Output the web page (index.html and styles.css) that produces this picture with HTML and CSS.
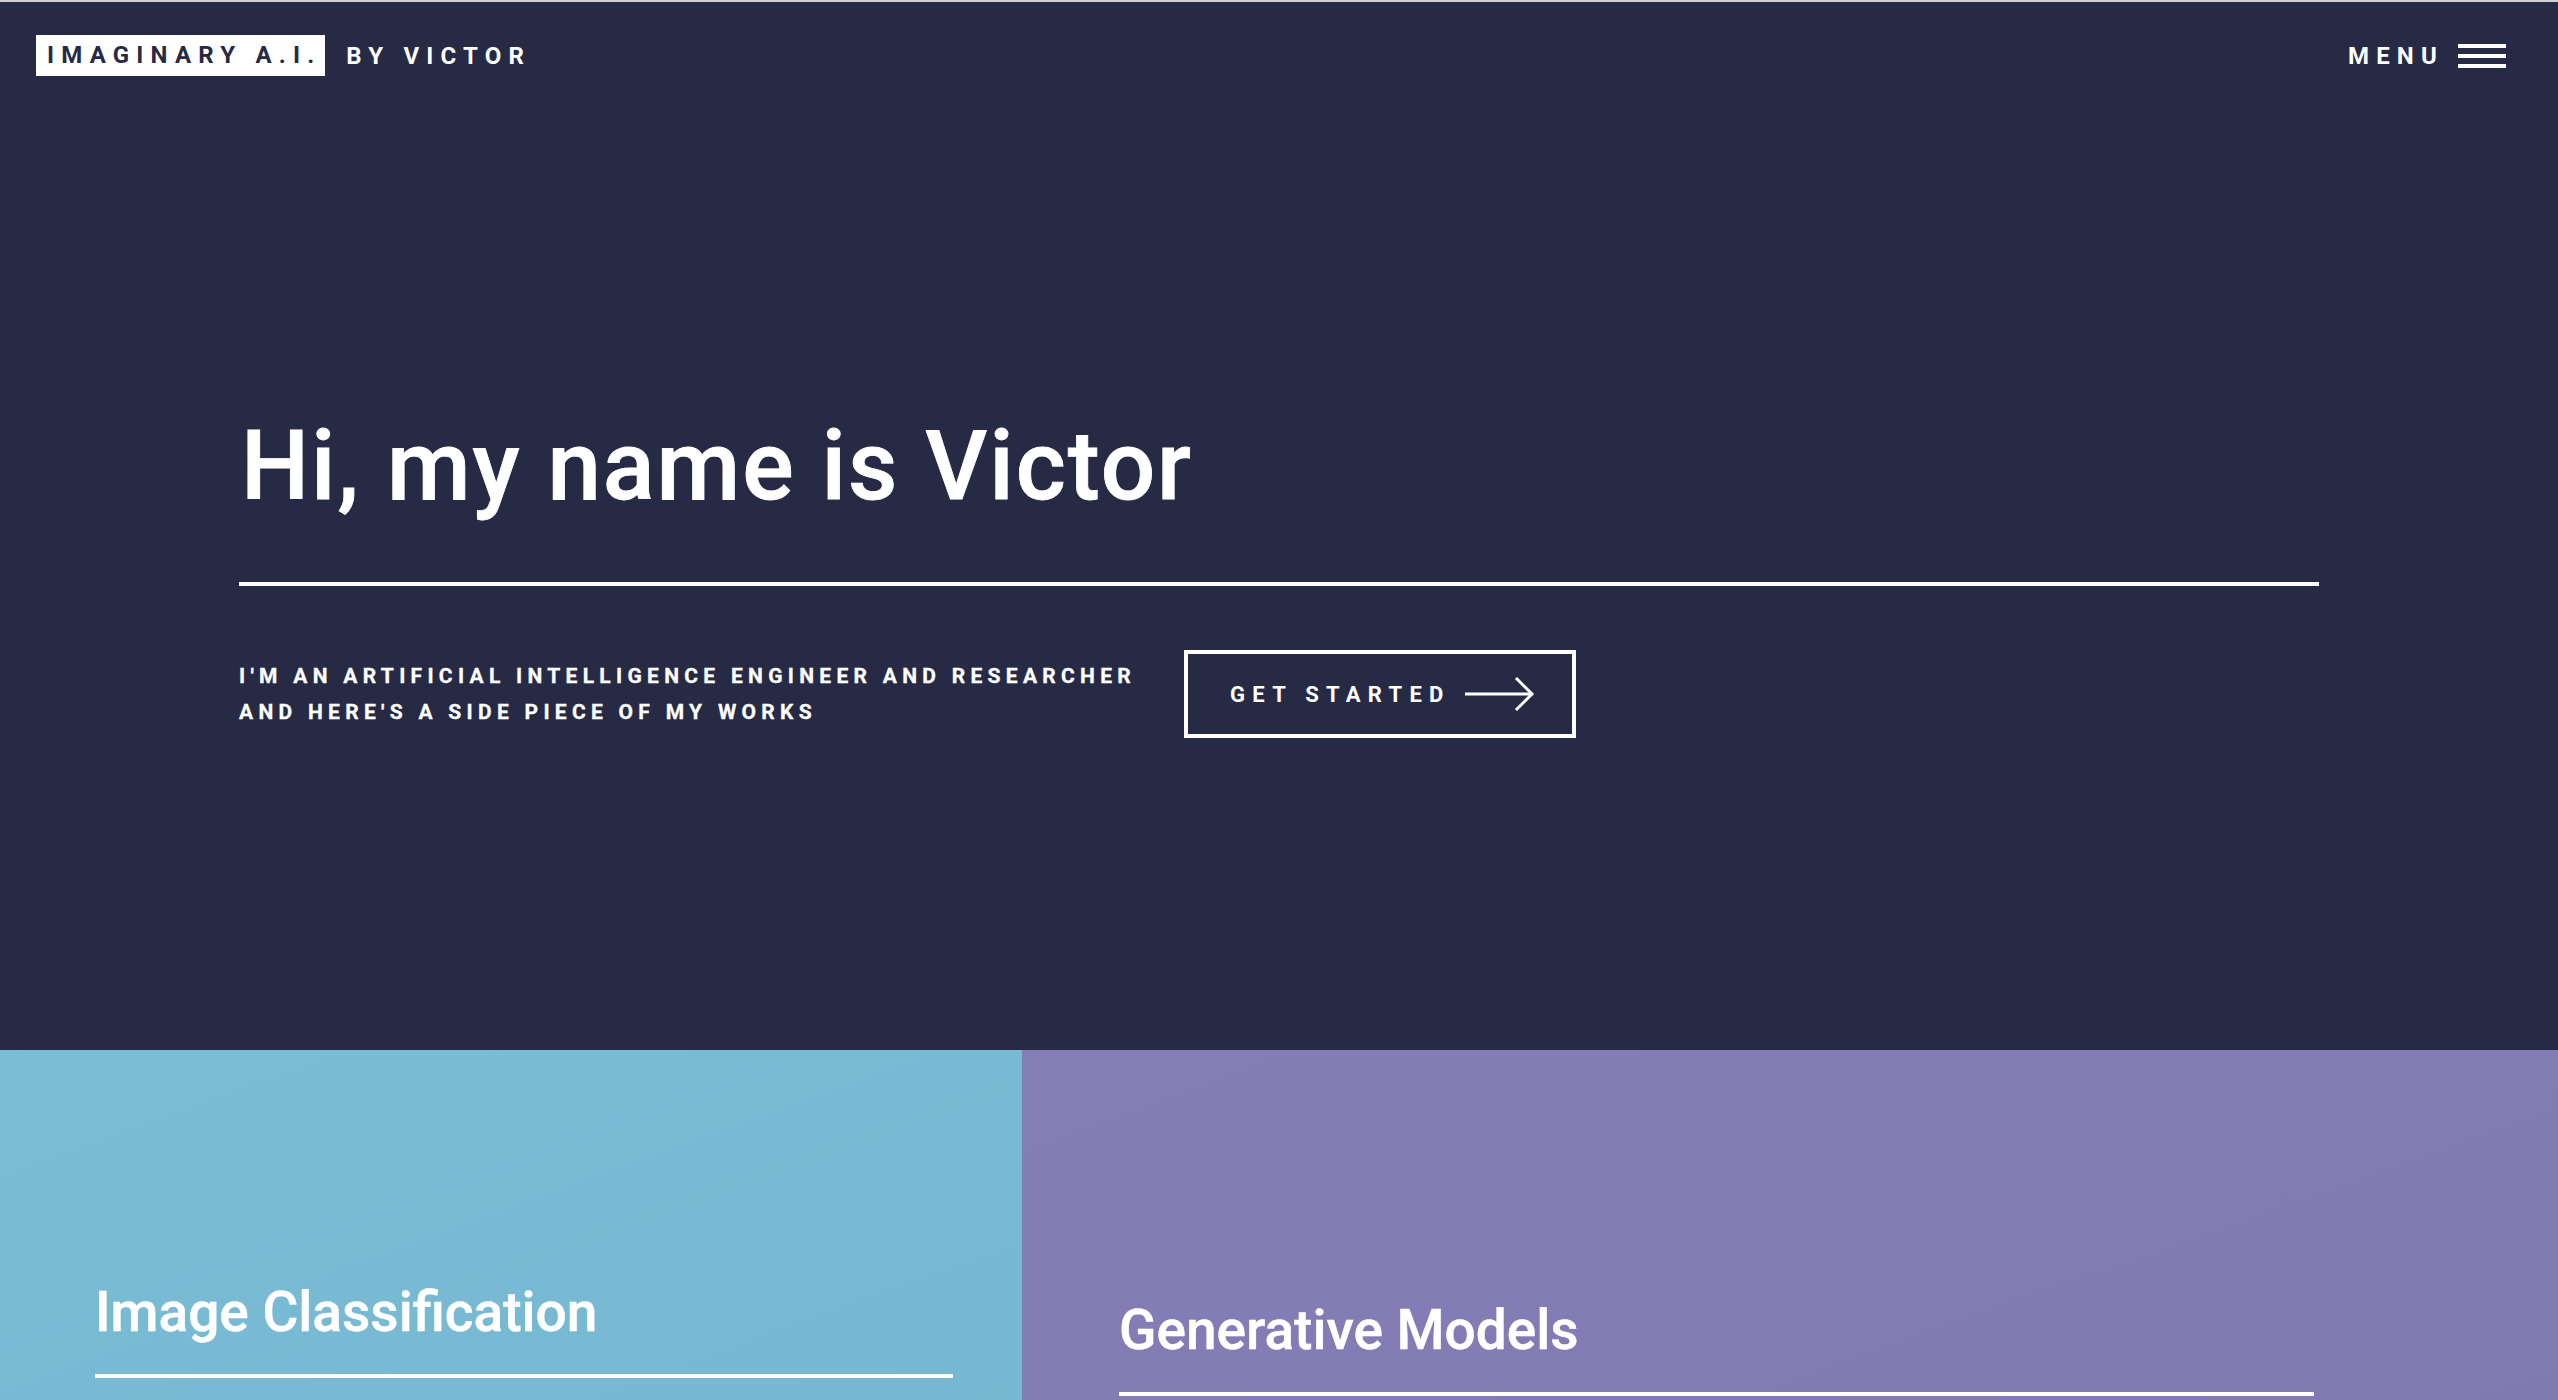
FILE: index.html
```html
<!DOCTYPE html>
<html lang="en">
<head>
<meta charset="utf-8">
<title>Imaginary A.I. by Victor</title>
<link rel="stylesheet" href="styles.css">
</head>
<body>
<div class="page">
  <section class="hero">
    <header class="topbar">
      <a class="brand" href="#">
        <span class="brand-box">IMAGINARY A.I.</span>
        <span class="brand-by">BY VICTOR</span>
      </a>
      <button class="menu" type="button">
        <span class="menu-label">MENU</span>
        <span class="burger"><i></i><i></i><i></i></span>
      </button>
    </header>
    <div class="hero-content">
      <h1 class="hero-title">Hi, my name is Victor</h1>
      <hr class="hero-rule">
      <div class="hero-row">
        <p class="hero-sub">I'M AN ARTIFICIAL INTELLIGENCE ENGINEER AND RESEARCHER<br>AND HERE'S A SIDE PIECE OF MY WORKS</p>
        <a class="cta" href="#">
          <span class="cta-label">GET STARTED</span>
          <svg class="cta-arrow" width="70" height="36" viewBox="0 0 70 36" aria-hidden="true">
            <line x1="0" y1="18" x2="67" y2="18" stroke="#fff" stroke-width="3"/>
            <polyline points="51,2 67,18 51,34" fill="none" stroke="#fff" stroke-width="3"/>
          </svg>
        </a>
      </div>
    </div>
  </section>
  <section class="works">
    <article class="card card-blue">
      <h2 class="card-title">Image Classification</h2>
      <div class="card-rule"></div>
    </article>
    <article class="card card-purple">
      <h2 class="card-title">Generative Models</h2>
      <div class="card-rule"></div>
    </article>
  </section>
</div>
</body>
</html>
```
FILE: styles.css
```css
* { box-sizing: border-box; }
html, body {
  margin: 0;
  padding: 0;
  background: #262a45;
  overflow: hidden;
}
body {
  font-family: Roboto, "Liberation Sans", sans-serif;
  color: #fff;
}
.page {
  border-top: 2px solid #cfd0d6;
}
.hero {
  height: 1048px;
  background: #262a45;
  display: flex;
  flex-direction: column;
}
.topbar {
  display: flex;
  justify-content: space-between;
  align-items: center;
  padding: 33px 52px 0 36px;
  height: 74px;
}
.brand {
  display: flex;
  align-items: center;
  text-decoration: none;
  color: #fff;
  font-weight: 700;
  font-size: 24px;
  letter-spacing: 0.3em;
}
.brand-box {
  background: #fff;
  color: #262a45;
  height: 41px;
  line-height: 41px;
  padding: 0 4px 0 11px;
}
.brand-by {
  margin-left: 21px;
}
.menu {
  display: flex;
  align-items: center;
  background: none;
  border: 0;
  padding: 0;
  color: #fff;
  font-family: inherit;
  font-weight: 700;
  font-size: 24px;
  letter-spacing: 0.3em;
  cursor: pointer;
}
.menu-label { margin-right: 14px; }
.burger {
  display: flex;
  flex-direction: column;
  gap: 6px;
  width: 48px;
}
.burger i {
  display: block;
  height: 4px;
  background: #fff;
}
.hero-content {
  width: 2080px;
  margin: 0 auto;
  padding-top: 342px;
}
.hero-title {
  margin: 0;
  font-size: 96px;
  line-height: 1;
  font-weight: 500;
  letter-spacing: 2px;
  padding-left: 2px;
  -webkit-text-stroke: 0.8px #fff;
}
.hero-rule {
  margin: 68px 0 0;
  border: 0;
  height: 4px;
  background: #fff;
}
.hero-row {
  display: flex;
  align-items: center;
  margin-top: 64px;
}
.hero-sub {
  margin: 0 48px 0 0;
  font-size: 21px;
  line-height: 36px;
  font-weight: 700;
  letter-spacing: 0.252em;
  -webkit-text-stroke: 0.3px #fff;
}
.cta {
  display: flex;
  align-items: center;
  height: 88px;
  border: 4px solid #fff;
  padding: 0 37px 0 42px;
  color: #fff;
  text-decoration: none;
}
.cta-label {
  font-size: 22px;
  font-weight: 700;
  letter-spacing: 0.33em;
  margin-right: 14px;
}
.cta-arrow { display: block; }
.works {
  display: flex;
  height: 700px;
}
.card {
  display: flex;
  flex-direction: column;
  align-items: flex-start;
}
.card-blue {
  width: 1022px;
  padding: 235px 0 0 95px;
  background: linear-gradient(160deg, #7abdd5 0%, #77b9d2 50%, #74b5ce 100%);
}
.card-purple {
  flex: 1;
  padding: 253px 0 0 97px;
  background: linear-gradient(160deg, #847db6 0%, #827bb4 50%, #7e77b0 100%);
}
.card-title {
  margin: 0;
  font-size: 55px;
  line-height: 1;
  font-weight: 500;
  -webkit-text-stroke: 0.5px #fff;
}
.card-rule {
  height: 4px;
  background: #fff;
  margin-top: 34px;
}
.card-blue .card-rule { width: 858px; }
.card-purple .card-rule { width: 1195px; }
```
